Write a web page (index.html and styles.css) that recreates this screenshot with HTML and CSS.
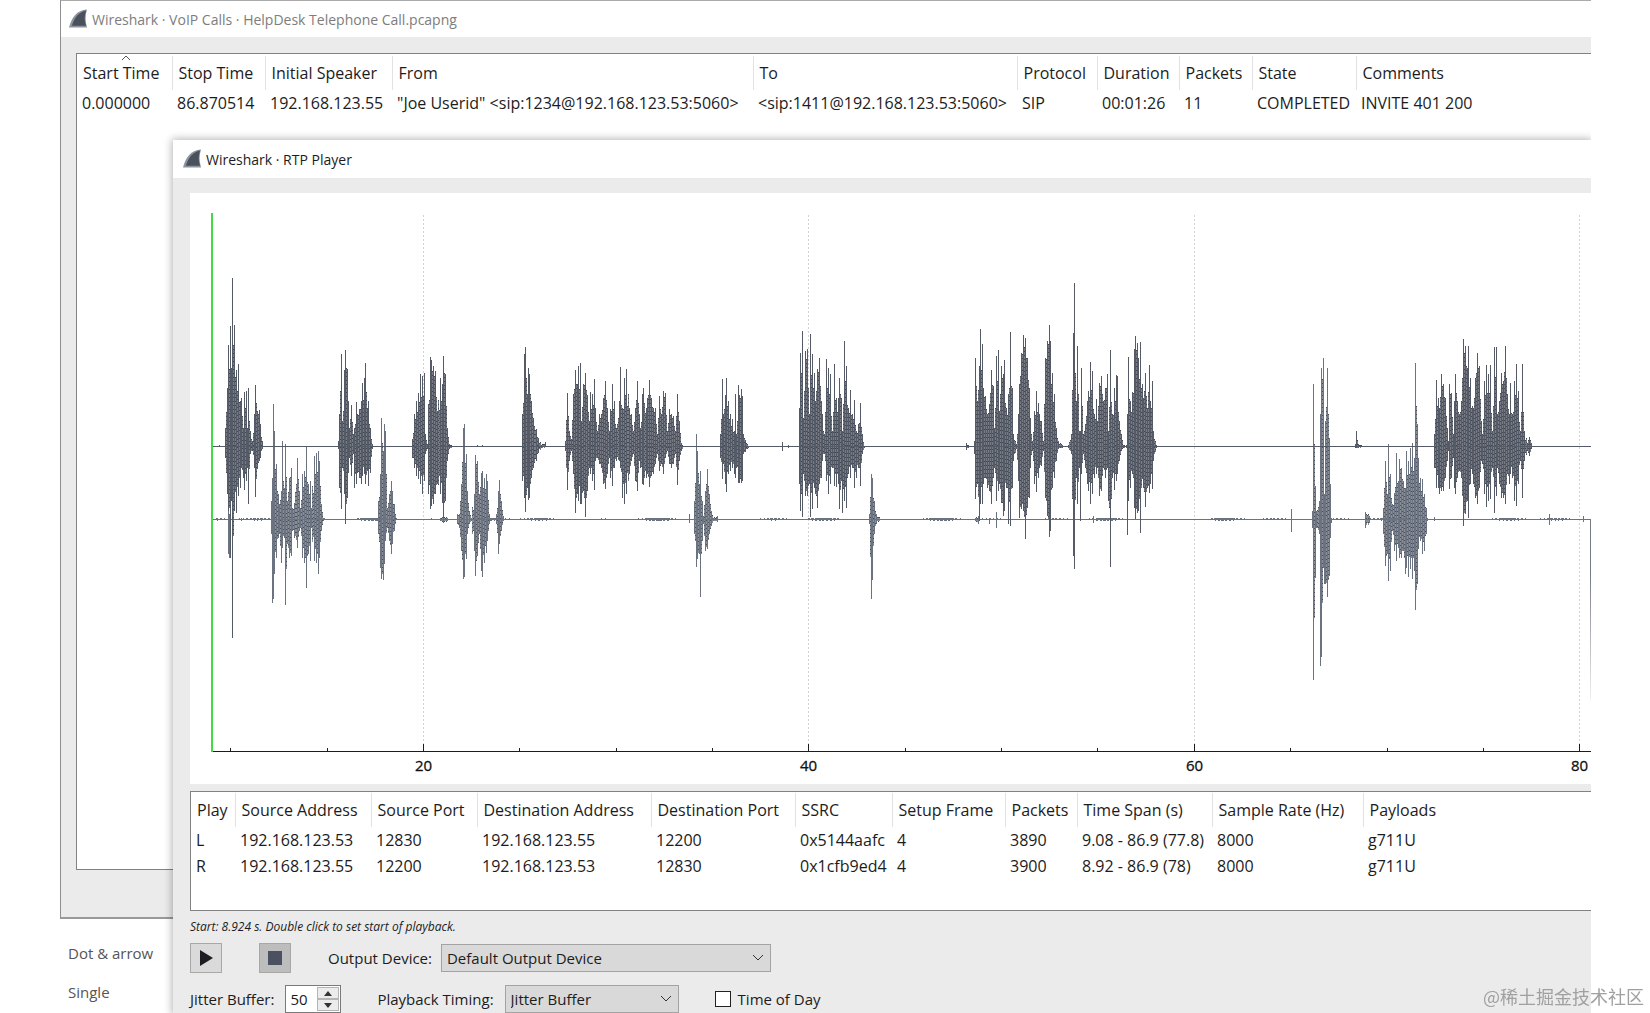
FILE: index.html
```html
<!DOCTYPE html>
<html lang="en">
<head>
    <meta charset="UTF-8">
    <meta name="viewport" content="width=device-width, initial-scale=1.0">
    <title>Wireshark - RTP Player</title>
    <link rel="stylesheet" href="styles.css">
</head>
<body>

    <main class="desktop">

        <!-- VoIP Calls window -->
        <section class="window calls">
            <header class="title-bar inactive">
                <svg class="fin" viewBox="0 0 20 20" aria-hidden="true">
                    <path d="M0 19C3 8 8 1 19 0C17 6 17 12 19 19Z" fill="#8b949e"/>
                    <path d="M3 17C6 8 10 3 18 1C16 7 16 12 18 17Z" fill="#4a505c"/>
                </svg>
                <h1>Wireshark · VoIP Calls · HelpDesk Telephone Call.pcapng</h1>
            </header>
            <div class="calls-list">
                <svg class="sort-mark" viewBox="0 0 10 6" aria-hidden="true"><path d="M1 5L5 1L9 5" fill="none" stroke="#555"/></svg>
                <table>
                    <colgroup>
                        <col class="w94"><col class="w93"><col class="w127"><col class="w361"><col class="w264">
                        <col class="w80"><col class="w82"><col class="w73"><col class="w104"><col>
                    </colgroup>
                    <thead>
                        <tr><th>Start Time</th><th>Stop Time</th><th>Initial Speaker</th><th>From</th><th>To</th><th>Protocol</th><th>Duration</th><th>Packets</th><th>State</th><th>Comments</th></tr>
                    </thead>
                    <tbody>
                        <tr><td>0.000000</td><td>86.870514</td><td>192.168.123.55</td><td>"Joe Userid" &lt;sip:1234@192.168.123.53:5060&gt;</td><td>&lt;sip:1411@192.168.123.53:5060&gt;</td><td>SIP</td><td>00:01:26</td><td>11</td><td>COMPLETED</td><td>INVITE 401 200</td></tr>
                    </tbody>
                </table>
            </div>
        </section>

        <ul class="line-styles">
            <li>Dot &amp; arrow</li>
            <li>Single</li>
        </ul>

        <!-- RTP Player window -->
        <section class="window player">
            <header class="title-bar">
                <svg class="fin" viewBox="0 0 20 20" aria-hidden="true">
                    <path d="M0 19C3 8 8 1 19 0C17 6 17 12 19 19Z" fill="#8b949e"/>
                    <path d="M3 17C6 8 10 3 18 1C16 7 16 12 18 17Z" fill="#4a505c"/>
                </svg>
                <h2>Wireshark · RTP Player</h2>
            </header>
            <div class="player-body">
                <svg class="chart" id="chart" role="img" aria-label="Audio waveform">
                    <defs>
                        <linearGradient id="fade" x1="0" y1="0" x2="0" y2="1">
                            <stop offset="0.3" stop-color="#777b83"/>
                            <stop offset="1" stop-color="#777b83" stop-opacity="0.1"/>
                        </linearGradient>
                    </defs>
                    <g id="grid"></g>
                    <g id="trace-right" class="trace-right"></g>
                    <g id="trace-left" class="trace-left"></g>
                    <rect x="1400" y="326" width="1" height="182" fill="url(#fade)"/>
                    <rect class="cursor" x="21" y="20" width="2" height="539"/>
                </svg>

                <div class="streams">
                    <table>
                        <colgroup>
                            <col class="w44"><col class="w136"><col class="w106"><col class="w174"><col class="w144"><col class="w97">
                            <col class="w113"><col class="w72"><col class="w135"><col class="w151"><col>
                        </colgroup>
                        <thead>
                            <tr><th>Play</th><th>Source Address</th><th>Source Port</th><th>Destination Address</th><th>Destination Port</th><th>SSRC</th><th>Setup Frame</th><th>Packets</th><th>Time Span (s)</th><th>Sample Rate (Hz)</th><th>Payloads</th></tr>
                        </thead>
                        <tbody>
                            <tr><td>L</td><td>192.168.123.53</td><td>12830</td><td>192.168.123.55</td><td>12200</td><td>0x5144aafc</td><td>4</td><td>3890</td><td>9.08 - 86.9 (77.8)</td><td>8000</td><td>g711U</td></tr>
                            <tr><td>R</td><td>192.168.123.55</td><td>12200</td><td>192.168.123.53</td><td>12830</td><td>0x1cfb9ed4</td><td>4</td><td>3900</td><td>8.92 - 86.9 (78)</td><td>8000</td><td>g711U</td></tr>
                        </tbody>
                    </table>
                </div>

                <p class="hint">Start: 8.924 s. Double click to set start of playback.</p>

                <div class="controls">
                    <button type="button" class="tool" aria-label="Play">
                        <svg width="14" height="16" viewBox="0 0 14 16"><path d="M1 0L14 8L1 16Z" fill="#1c1e22"/></svg>
                    </button>
                    <button type="button" class="tool stop" aria-label="Stop">
                        <svg width="14" height="14" viewBox="0 0 14 14"><rect width="14" height="14" fill="#4b5160"/></svg>
                    </button>
                    <label for="device">Output Device:</label>
                    <select id="device" class="device"><option>Default Output Device</option></select>
                </div>

                <div class="controls second">
                    <label for="jitter">Jitter Buffer:</label>
                    <div class="spin">
                        <input type="text" id="jitter" value="50">
                        <div class="spin-buttons">
                            <button type="button" aria-label="Increase"><svg width="8" height="5" viewBox="0 0 8 5"><path d="M0 5L4 0L8 5Z" fill="#333"/></svg></button>
                            <button type="button" aria-label="Decrease"><svg width="8" height="5" viewBox="0 0 8 5"><path d="M0 0L4 5L8 0Z" fill="#333"/></svg></button>
                        </div>
                    </div>
                    <label for="timing" class="timing-label">Playback Timing:</label>
                    <select id="timing" class="timing"><option>Jitter Buffer</option></select>
                    <label class="check"><input type="checkbox"> Time of Day</label>
                </div>
            </div>
        </section>
    </main>

    <div class="watermark">@稀土掘金技术社区</div>

    <script src="waveform.js"></script>
</body>
</html>
```
FILE: styles.css
```css
* {
    box-sizing: border-box;
}

body {
    margin: 0;
    background-color: #fff;
    color: #1c1c1c;
    font-family: "Open Sans", "Noto Sans", sans-serif;
    font-size: 16px;
    overflow: hidden;
}

.desktop {
    position: relative;
    height: 100vh;
    margin: 0 59px 0 60px;
    overflow: hidden;
}

/* Windows */
.window {
    background-color: #ebebeb;
}

.calls {
    height: 919px;
    padding-bottom: 47px;
    display: flex;
    flex-direction: column;
    border: 1px solid #8e8e8e;
    border-top-color: #aaa;
    border-bottom: 2px solid #999;
    border-right: none;
}

.player {
    position: absolute;
    top: 140px;
    left: 113px;
    right: 0;
    box-shadow: 0 0 8px 1px rgba(0, 0, 0, 0.3);
}

.title-bar {
    display: flex;
    align-items: center;
    gap: 4px;
    height: 38px;
    padding-left: 10px;
    background-color: #fff;
}

.inactive {
    height: 36px;
    padding-left: 8px;
}

.title-bar h1,
.title-bar h2 {
    margin: 0;
    font-size: 14px;
    font-weight: normal;
}

.inactive h1 {
    color: #7d7d7d;
}

.fin {
    width: 19px;
    height: 20px;
}

/* Tables */
table {
    width: 100%;
    border-collapse: collapse;
    table-layout: fixed;
    white-space: nowrap;
}

th {
    height: 34px;
    padding: 0 0 0 6px;
    border-left: 1px solid #e2e2e2;
    font-weight: normal;
    text-align: left;
}

th:first-child {
    border-left: none;
}

td {
    height: 26px;
    padding: 0 0 0 5px;
}

.calls-list {
    position: relative;
    flex: 1;
    margin: 16px 0 0 15px;
    padding-top: 2px;
    border: 1px solid #828282;
    border-right: none;
    background-color: #fff;
}

.sort-mark {
    position: absolute;
    top: 1px;
    left: 44px;
    width: 10px;
    height: 6px;
}

.w44 { width: 44px; }
.w72 { width: 72px; }
.w73 { width: 73px; }
.w80 { width: 80px; }
.w82 { width: 82px; }
.w93 { width: 93px; }
.w94 { width: 95px; }
.w97 { width: 97px; }
.w104 { width: 104px; }
.w106 { width: 106px; }
.w113 { width: 113px; }
.w127 { width: 127px; }
.w135 { width: 135px; }
.w136 { width: 136px; }
.w144 { width: 144px; }
.w151 { width: 151px; }
.w174 { width: 174px; }
.w264 { width: 264px; }
.w361 { width: 361px; }

.line-styles {
    margin: 0;
    padding: 15px 0 0 8px;
    list-style: none;
    color: #555;
    font-size: 15px;
    line-height: 39px;
}

/* Player */
.player-body {
    padding: 15px 0 0 17px;
}

.chart {
    display: block;
    width: 100%;
    height: 591px;
    background-color: #fff;
}

.grid-line {
    stroke: #d2d2d2;
    stroke-dasharray: 2 2;
}

.axis {
    fill: none;
    stroke: #1c1c1c;
}

.tick-label {
    font-size: 15px;
    text-anchor: middle;
    fill: #111;
    stroke: #111;
    stroke-width: 0.3px;
}

.trace-left {
    fill: none;
    stroke: #555a67;
}

.trace-right {
    fill: none;
    stroke: #6c7380;
}

.soft {
    stroke-opacity: 0.8;
}

.grain {
    stroke: #23252d;
    stroke-dasharray: 1 3;
    stroke-opacity: 0.6;
}

.cursor {
    fill: #3fdc48;
}

.streams {
    height: 120px;
    margin-top: 7px;
    padding-top: 1px;
    border: 1px solid #828282;
    border-right: none;
    background-color: #fff;
}

.hint {
    margin: 6px 0;
    font-size: 12px;
    font-style: italic;
    line-height: 20px;
}

.controls {
    display: flex;
    align-items: center;
    height: 30px;
}

.second {
    margin-top: 11px;
}

.tool {
    display: flex;
    align-items: center;
    justify-content: center;
    width: 32px;
    height: 30px;
    margin-right: 37px;
    padding: 0;
    border: 1px solid #a8a8a8;
    background-color: #dadada;
}

.stop {
    background-color: #bdbdbd;
}

select {
    height: 28px;
    margin-left: 9px;
    padding: 0 5px;
    border: 1px solid #a3a3a3;
    border-radius: 0;
    appearance: none;
    background: #d9d9d9 url("data:image/svg+xml,%3Csvg xmlns='http://www.w3.org/2000/svg' width='10' height='6'%3E%3Cpath d='M0 0L5 5L10 0' fill='none' stroke='%23333'/%3E%3C/svg%3E") no-repeat right 7px center;
    color: #1c1c1c;
    font-family: inherit;
    font-size: 15px;
}

.controls label {
    font-size: 15px;
}

.device {
    width: 330px;
}

.timing {
    width: 174px;
    margin-left: 11px;
}

.spin {
    display: flex;
    width: 56px;
    height: 28px;
    margin-left: 11px;
    padding: 1px;
    border: 1px solid #7a7a7a;
    background-color: #fff;
}

.spin input {
    flex: 1;
    min-width: 0;
    padding: 0 0 0 3px;
    border: none;
    background: none;
    color: #1c1c1c;
    font-family: inherit;
    font-size: 15px;
}

.spin-buttons {
    display: flex;
    flex-direction: column;
    width: 22px;
}

.spin-buttons button {
    display: flex;
    flex: 1;
    align-items: center;
    justify-content: center;
    padding: 0;
    border: 1px solid #b5b5b5;
    background-color: #ececec;
}

.timing-label {
    margin-left: 36px;
}

.check {
    display: flex;
    align-items: center;
    gap: 7px;
    margin-left: 36px;
}

.check input {
    width: 16px;
    height: 16px;
    margin: 0;
    border: 1px solid #222;
    appearance: none;
    background-color: #fff;
}

.watermark {
    position: fixed;
    right: 6px;
    bottom: 4px;
    color: #a0a0a0;
    font-family: "Noto Sans CJK SC", sans-serif;
    font-size: 18px;
    line-height: 26px;
}
```
FILE: waveform.js
```js
// Peaks of both channels: x, top, bottom, in thirds of a pixel.
// Each block has its own x origin on the chart, in pixels.
const left = [
    { origin: -10, peaks: [
        118,733,739, 136,680,770, 141,560,880, 145,432,930, 149,376,1070, 153,500,900, 157,232,1312, 163,372,930, 169,508,935,
        175,490,885, 180,600,860, 184,590,800, 188,680,830, 193,574,868, 197,570,840, 200,680,800, 205,562,910, 210,690,760,
        216,720,750, 222,640,800, 226,552,888, 231,630,803, 236,628,780, 241,670,770, 245,720,745,
        474,720,745, 478,640,860, 483,460,925, 487,660,800, 491,506,880, 496,448,968, 500,505,890, 504,600,815, 508,680,770,
        514,612,825, 519,700,760, 523,680,860, 527,603,850, 532,640,815, 537,625,830, 542,600,850, 547,545,825, 552,530,820,
        556,487,850, 561,620,810, 565,600,855, 570,680,815, 575,730,745,
        697,715,770, 703,640,800, 709,600,825, 715,575,835, 721,520,850, 725,525,880, 731,516,840, 735,700,760, 740,730,745,
        745,610,880, 749,468,925, 754,478,915, 760,495,910, 766,510,880, 772,630,850, 779,530,880, 785,550,905, 790,465,950,
        796,520,900, 800,680,780, 808,728,744, 815,736,738, 890,733,739, 905,733,739,
        1027,640,840, 1031,460,890, 1036,438,934, 1040,580,860, 1044,500,898, 1048,520,890, 1054,600,830, 1060,650,800,
        1067,685,780, 1075,710,755, 1083,732,742, 1095,722,738,
        1156,720,750, 1160,577,866, 1166,690,780, 1174,715,750, 1180,580,820, 1186,507,935, 1190,550,880, 1194,495,900,
        1199,486,910, 1204,660,910, 1210,548,870, 1215,515,948, 1221,582,870, 1226,660,800, 1231,572,820, 1236,580,840,
        1241,535,868, 1246,620,780, 1251,690,770, 1256,640,790, 1262,640,800, 1268,590,850, 1274,540,865, 1280,620,820,
        1286,690,770, 1291,625,830, 1297,548,855, 1303,600,800, 1309,680,780, 1316,600,780, 1321,497,800, 1327,620,890,
        1332,530,908, 1339,505,880, 1346,620,820, 1352,640,780, 1358,690,760, 1364,620,840, 1370,540,870, 1376,640,780
    ] },
    { origin: 450, peaks: [
        0,680,800, 5,580,850, 10,562,853, 17,620,830, 22,590,820, 28,537,857, 34,590,825, 40,620,820, 46,620,790, 52,700,760,
        57,585,810, 62,640,790, 70,570,820, 75,575,770, 82,690,750, 88,625,790, 94,640,800, 100,645,790, 106,690,760,
        112,580,853, 118,660,780, 124,725,750, 130,735,738,
        240,700,770, 246,535,835, 250,640,790, 255,583,850, 259,530,872, 264,600,820, 270,640,810, 276,655,800, 282,690,820,
        286,578,830, 289,700,800, 293,552,845, 298,583,845, 302,565,845, 307,585,840, 310,700,760, 316,718,752, 325,735,740,
        426,724,750, 445,733,740,
        478,620,850, 481,455,930, 485,390,948, 490,650,820, 495,450,885, 501,443,885, 506,640,850, 511,398,948, 516,460,925,
        521,515,860, 525,600,880, 530,505,920, 537,470,850, 542,600,830, 547,640,780, 552,700,760, 558,475,840, 564,500,880,
        570,520,850, 576,690,800, 583,488,855, 588,590,858, 593,590,850, 597,530,925, 602,590,840, 606,690,935, 613,420,900,
        618,495,920, 623,620,820, 631,567,830, 637,640,800, 643,597,860, 648,690,830, 655,670,800, 661,605,855, 666,700,760,
        672,734,740,
        977,725,748, 985,733,742, 1002,720,760, 1006,470,895, 1011,600,850, 1016,495,960, 1020,384,908, 1025,430,910,
        1030,560,850, 1036,585,830, 1042,640,860, 1048,610,870, 1053,507,908, 1058,555,830, 1063,680,800, 1068,465,900,
        1073,447,870, 1078,630,850, 1084,495,905, 1088,520,945, 1093,477,930, 1098,620,860, 1104,580,970, 1110,393,975,
        1115,560,860, 1120,700,780, 1127,730,745, 1133,640,840, 1138,550,950, 1143,455,925, 1148,402,930, 1154,410,1013,
        1160,470,920, 1166,560,890, 1171,650,800, 1177,720,750, 1182,630,850, 1187,570,872, 1193,605,830, 1198,640,800,
        1204,660,795, 1210,720,750, 1216,470,890, 1221,420,945, 1226,372,1008, 1231,420,990, 1237,515,860, 1243,580,830,
        1248,680,780, 1253,720,745, 1265,732,740, 1285,733,741,
        1293,700,760, 1298,396,1065, 1303,246,1105, 1307,600,830, 1311,435,910, 1316,690,800, 1320,690,960, 1324,502,820,
        1330,700,760, 1334,670,800, 1340,600,850, 1345,570,870, 1350,482,910, 1355,510,880, 1361,640,830, 1367,595,820,
        1372,660,800, 1378,545,885, 1384,525,870, 1390,600,800, 1396,560,830, 1401,520,800, 1405,690,900, 1410,448,1097,
        1415,640,830, 1421,560,868, 1427,522,840, 1432,525,820
    ] },
    { origin: 910, peaks: [
        52,580,810, 58,660,780, 62,700,750, 68,733,740, 78,733,740, 82,640,1002, 85,467,900, 90,600,860, 95,574,820,
        101,445,920, 106,405,955, 111,425,935, 115,470,930, 120,422,997, 125,550,835, 130,590,860, 136,515,918, 141,620,860,
        146,493,875, 151,600,850, 156,540,863, 160,690,780, 168,733,742,
        764,730,742, 769,690,742, 774,730,742, 786,734,739,
        1003,700,800, 1009,537,860, 1014,590,860, 1018,620,880, 1023,520,870, 1028,550,870, 1034,590,830, 1040,680,780,
        1044,720,750, 1048,548,863, 1053,575,830, 1058,700,770, 1062,600,860, 1066,518,880, 1071,600,830, 1078,640,810,
        1084,600,830, 1090,415,975, 1095,435,940, 1100,500,900, 1104,435,950, 1109,530,850, 1115,615,820, 1120,620,850,
        1125,530,890, 1130,455,910, 1136,495,860, 1142,660,780, 1147,700,790, 1153,540,880, 1159,492,918, 1165,520,900,
        1171,492,895, 1176,690,800, 1181,437,935, 1187,437,885, 1192,640,800, 1198,600,850, 1203,515,890, 1209,540,890,
        1215,435,908, 1221,580,820, 1226,640,850, 1231,545,820, 1237,640,830, 1243,540,900, 1249,488,915, 1255,570,850,
        1260,690,780, 1267,490,890, 1272,690,780, 1280,725,750, 1287,708,765, 1294,725,745
    ] }
];

const right = [
    { origin: -10, peaks: [
        145,920,1060, 148,940,1070, 183,950,960,
        272,900,1000, 275,830,1205, 278,610,1195, 283,690,1120, 288,790,1070, 293,880,1010, 298,910,1000, 304,870,1085,
        307,720,1040, 312,860,1010, 316,730,1212, 321,900,1030, 326,830,1070, 332,800,1065, 337,920,990, 343,905,1010,
        350,770,1040, 356,870,990, 361,920,980, 367,820,1070, 373,810,1085, 379,738,1160, 384,850,1060, 389,840,1080,
        394,920,980, 401,765,1080, 408,755,1085, 413,750,1118, 418,780,1070, 424,910,990, 428,950,960,
        595,900,1000, 600,820,1100, 604,650,1135, 608,750,1137, 612,670,1090, 616,690,1020, 620,920,980, 627,880,1020,
        632,840,1060, 637,870,1030, 642,910,990, 648,952,958,
        780,950,960, 790,945,965, 800,950,960, 830,940,970, 838,940,980, 843,850,1050, 848,680,1133, 853,668,1128,
        858,760,1075, 862,870,1000, 868,930,970, 874,950,960, 881,880,1050, 886,763,1125, 891,780,1065, 896,880,1000,
        902,815,1110, 906,810,1128, 911,830,1085, 917,820,1055, 922,840,1020, 926,940,970,
        948,940,970, 953,870,1058, 958,838,1030, 963,900,990, 969,945,960
    ] },
    { origin: 450, peaks: [
        148,940,965, 162,900,1000, 167,700,1097, 171,750,1075, 176,850,1060, 180,810,1188, 185,900,1020, 190,945,970,
        196,870,1050, 200,805,1045, 206,880,1000, 212,930,975, 220,950,960, 230,945,962,
        688,940,970, 692,818,1193, 697,830,1138, 701,900,1000, 708,940,968, 720,953,958,
        1006,950,960, 1013,945,970, 1048,950,968, 1068,932,980, 1360,945,965
    ] },
    { origin: 910, peaks: [
        572,925,993, 635,930,980, 640,550,1436, 644,855,1130, 649,930,980, 657,900,1000, 660,640,1395, 664,502,1368,
        668,470,1100, 672,880,1150, 676,660,1148, 681,500,1188, 686,710,1125, 690,850,1010, 694,950,965,
        796,932,980, 806,945,965,
        848,920,1000, 855,780,1095, 860,880,1060, 865,730,1140, 870,820,1110, 875,910,990, 882,875,1050, 887,755,1080,
        893,840,1040, 898,775,1070, 904,800,1070, 909,840,1050, 914,860,1118, 919,750,1100, 924,780,1128, 930,740,1105,
        936,725,1135, 941,770,1110, 946,487,1228, 950,668,1150, 955,770,1045, 961,830,1020, 967,835,1058, 973,880,1050,
        977,920,1000, 981,950,960, 1003,948,960, 1347,938,973, 1450,945,962
    ] }
];

const TOP = 8;

function drawTrace(id, blocks, base, end, noise) {
    const y = v => Math.round(TOP + v / 3);
    let line = `M22 ${y(base) + 0.5}H${end}`;
    let peaks = '';
    let between = '';

    blocks.forEach(block => {
        let prev = null;
        for (let i = 0; i < block.peaks.length; i += 3) {
            const [px, top, bottom] = block.peaks.slice(i, i + 3);
            const x = Math.round(block.origin + px / 3);
            // Fill the columns between two close peaks, a bit shorter than their mean
            if (prev && x - prev.x <= 4) {
                for (let c = prev.x + 1; c < x; c++) {
                    const k = c % 2 ? 0.7 : 0.9;
                    const t = base + ((top + prev.top) / 2 - base) * k;
                    const b = base + ((bottom + prev.bottom) / 2 - base) * k;
                    between += `M${c + 0.5} ${y(t)}V${y(b)}`;
                }
            }
            peaks += `M${x + 0.5} ${y(top)}V${y(bottom)}`;
            prev = { x, top, bottom };
        }
    });

    // Low background noise on the line
    if (noise) {
        for (let x = 26; x < end - 8; x++) {
            const level = Math.sin(x / 9) + Math.sin(x / 23) + Math.sin(x * 1.7) * 0.6;
            if (level > 0.7) {
                line += `M${x + 0.5} ${y(base) - 1}v${level > 1.5 ? 3 : 2}`;
            }
        }
    }

    document.getElementById(id).innerHTML =
        `<path class="soft" d="${between}"/><path d="${peaks}"/>` +
        `<path class="grain" d="${between}"/><path d="${line}"/>`;
}

function drawGrid() {
    let html = '';
    let ticks = '';
    for (let s = 10; s <= 80; s += 5) {
        const x = Math.round(233 + (s - 20) * 19.27) + 0.5;
        if (s % 20 === 0) {
            html += `<path class="grid-line" d="M${x} 22V551"/>`;
            html += `<text class="tick-label" x="${x}" y="578">${s}</text>`;
            ticks += `M${x} 551V558`;
        } else {
            ticks += `M${x} 555V558`;
        }
    }
    html += `<path class="axis" d="M21 558.5H1401${ticks}"/>`;
    document.getElementById('grid').innerHTML = html;
}

drawGrid();
drawTrace('trace-left', left, 736, 1401, false);
drawTrace('trace-right', right, 955, 1401, true);
```
